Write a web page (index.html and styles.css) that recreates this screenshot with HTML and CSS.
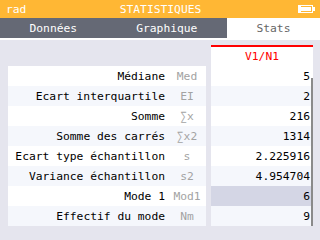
FILE: index.html
```html
<!DOCTYPE html>
<html lang="fr">
  <head>
    <meta charset="UTF-8" />
    <title>Statistiques</title>
    <link rel="stylesheet" href="styles.css">
  </head>
  <body>
    <div class="title-bar">
      <span class="angle">rad</span>
      <span class="title">STATISTIQUES</span>
      <span class="battery">
        <svg width="17" height="8" viewBox="0 0 17 8">
          <rect x="0.5" y="0.5" width="14" height="7" fill="none" stroke="#fff" />
          <rect x="3" y="2" width="10" height="4" fill="#fff" />
          <rect x="0" y="0" width="3" height="8" fill="#fff" />
          <rect x="15" y="2" width="2" height="4" fill="#fff" />
        </svg>
      </span>
    </div>

    <div class="tabs">
      <div class="tab">Données</div>
      <div class="tab">Graphique</div>
      <div class="tab active">Stats</div>
    </div>

    <div class="table">
      <div class="labels">
        <div class="row"><span class="name">Médiane</span><span class="abbr">Med</span></div>
        <div class="row odd"><span class="name">Ecart interquartile</span><span class="abbr">EI</span></div>
        <div class="row"><span class="name">Somme</span><span class="abbr">∑x</span></div>
        <div class="row odd"><span class="name">Somme des carrés</span><span class="abbr">∑x2</span></div>
        <div class="row"><span class="name">Ecart type échantillon</span><span class="abbr">s</span></div>
        <div class="row odd"><span class="name">Variance échantillon</span><span class="abbr">s2</span></div>
        <div class="row"><span class="name">Mode 1</span><span class="abbr">Mod1</span></div>
        <div class="row odd"><span class="name">Effectif du mode</span><span class="abbr">Nm</span></div>
      </div>

      <div class="column">
        <div class="column-title">V1/N1</div>
        <div class="value">5</div>
        <div class="value odd">2</div>
        <div class="value">216</div>
        <div class="value odd">1314</div>
        <div class="value">2.225916</div>
        <div class="value odd">4.954704</div>
        <div class="value selected">6</div>
        <div class="value odd">9</div>
        <div class="scrollbar"></div>
      </div>
    </div>
  </body>
</html>
```

FILE: styles.css
```css
body {
  margin: 0;
  width: 320px;
  height: 240px;
  overflow: hidden;
  background-color: #e5e5ee;
  font-family: "DejaVu Sans Mono", "Liberation Mono", monospace;
  font-size: 11.3px;
}

.title-bar {
  height: 18px;
  background-color: #ffb734;
  color: #fff;
  display: grid;
  grid-template-columns: 1fr auto 1fr;
  align-items: center;
  padding: 0 5px 0 6px;
}

.battery {
  justify-self: end;
  display: flex;
}

.tabs {
  display: flex;
  height: 20px;
  background-color: #656975;
  border-bottom: 2px solid #fff;
}

.tab {
  flex: auto;
  display: flex;
  align-items: center;
  justify-content: center;
  color: #fff;
}

.tab.active {
  background-color: #fff;
  color: #666;
}

.table {
  display: flex;
  gap: 5px;
  margin: 5px 0 0 8px;
}

.labels {
  width: 198px;
  margin-top: 21px;
}

.row {
  display: flex;
  height: 20px;
  align-items: center;
  background-color: #fff;
}

.odd {
  background-color: #f5f7fc;
}

.name {
  width: 157px;
  text-align: right;
  padding-right: 3px;
}

.abbr {
  flex: 1;
  text-align: center;
  color: #a3a3a3;
}

.column {
  position: relative;
  width: 102px;
  background-color: #fff;
  border-top: 2px solid #f00;
}

.column-title {
  height: 19px;
  display: flex;
  align-items: center;
  justify-content: center;
  color: #f00;
}

.value {
  height: 20px;
  display: flex;
  align-items: center;
  justify-content: flex-end;
  padding-right: 3px;
  background-color: #fff;
}

.value.odd {
  background-color: #f5f7fc;
}

.value.selected {
  background-color: #d4d6e5;
}

.scrollbar {
  position: absolute;
  right: 0;
  top: 31px;
  bottom: 0;
  width: 2px;
  background-color: #8a8a8a;
}
```
